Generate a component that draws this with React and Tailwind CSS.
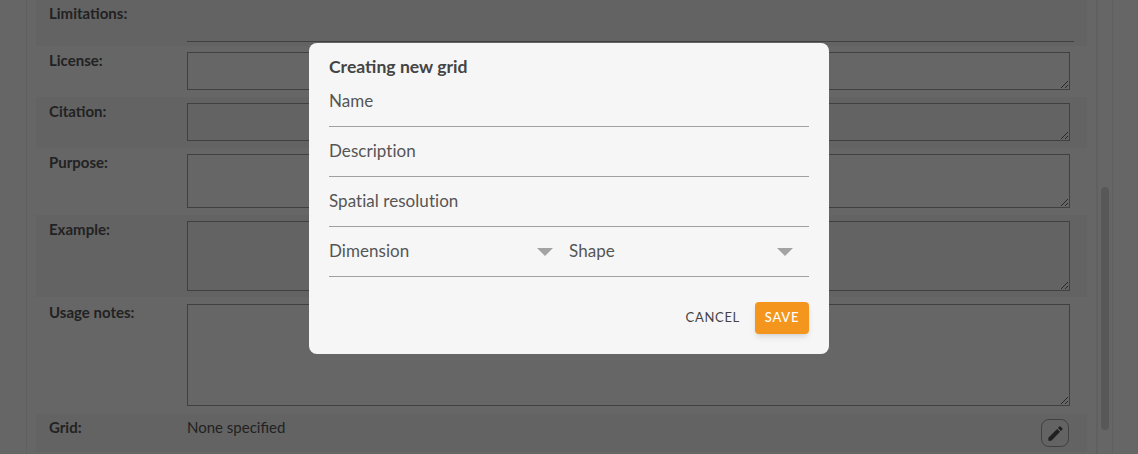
import { MdEdit } from "react-icons/md";

const font = { fontFamily: '"Lato", "Open Sans", sans-serif' };

function Row({ label, shaded, labelClass = "-mt-[2px]", className = "", children }) {
  return (
    <div className={`flex pl-[13px] pr-3 ${shaded ? "bg-[#f7f7f7]" : ""} ${className}`}>
      <div className={`w-[138px] shrink-0 text-[15px] font-bold leading-5 text-[#555] ${labelClass}`}>{label}</div>
      {children}
    </div>
  );
}

function Area({ height }) {
  return <textarea className={`block w-[883px] border border-[#a0a0a0] bg-transparent ${height}`} />;
}

function Field({ label, select, className = "" }) {
  return (
    <div className={`flex h-[50px] items-center justify-between border-b border-[#a0a0a0] ${className}`}>
      <span className="-mt-[2px] text-[17px] tracking-[0.05px] text-[#555]">{label}</span>
      {select && <span className="mr-4 h-0 w-0 border-x-8 border-t-[8px] border-x-transparent border-t-[#a3a3a3]" />}
    </div>
  );
}

export default function App() {
  return (
    <div className="relative flex h-[454px] w-[1138px] overflow-hidden bg-white" style={font}>
      {/* page behind the dialog */}
      <div className="ml-[26px] w-[1071px] border-x border-[#f0f0f0] px-[9px]">
        <Row label="Limitations:" shaded labelClass="-mt-px" className="h-[46px] pt-1">
          <div className="mt-[37px] h-px w-[887px] bg-[#a0a0a0]" />
        </Row>
        <Row label="License:" className="h-[51px] pt-[6px]"><Area height="h-[38px]" /></Row>
        <Row label="Citation:" shaded className="h-[51px] pt-[6px]"><Area height="h-[38px]" /></Row>
        <Row label="Purpose:" className="h-[67px] pt-[6px]"><Area height="h-[54px]" /></Row>
        <Row label="Example:" shaded className="h-[82px] pt-[6px]"><Area height="h-[70px]" /></Row>
        <Row label="Usage notes:" className="h-[117px] pt-[7px]"><Area height="h-[102px]" /></Row>
        <Row label="Grid:" shaded labelClass="" className="h-[38px] pt-[3px]">
          <div className="flex w-[882px] justify-between">
            <span className="text-[15px] leading-5 text-[#555]">None specified</span>
            <button className="mt-[2px] flex h-7 w-7 items-center justify-center rounded-lg border border-[#a0a0a0] text-[#505050]">
              <MdEdit size={19} />
            </button>
          </div>
        </Row>
      </div>

      {/* scrollbar */}
      <div className="relative w-4 border-x border-[#f0f0f0] bg-white">
        <div className="absolute left-[3px] top-[187px] h-[243px] w-2 rounded bg-[#dcdcdc]" />
      </div>

      {/* overlay + dialog */}
      <div className="absolute inset-0 flex justify-center bg-black/60 pt-[43px]">
        <div className="h-[311px] w-[520px] rounded-lg bg-[#f6f6f6] px-5 pt-[13px]">
          <h2 className="text-[17.6px] font-bold leading-[22px] text-[#444]">Creating new grid</h2>
          <div className="-mt-[1px]">
            <Field label="Name" />
            <Field label="Description" />
            <Field label="Spatial resolution" />
            <div className="flex">
              <Field label="Dimension" select className="w-[240px]" />
              <Field label="Shape" select className="w-[240px]" />
            </div>
          </div>
          <div className="mt-[25px] flex items-center justify-end">
            <button className="mr-[15px] text-[13px] tracking-[0.7px] text-[#444]">CANCEL</button>
            <button className="h-8 w-[54px] rounded bg-[#f4961e] text-[13px] font-medium tracking-[0.8px] text-white shadow-md">SAVE</button>
          </div>
        </div>
      </div>
    </div>
  );
}
